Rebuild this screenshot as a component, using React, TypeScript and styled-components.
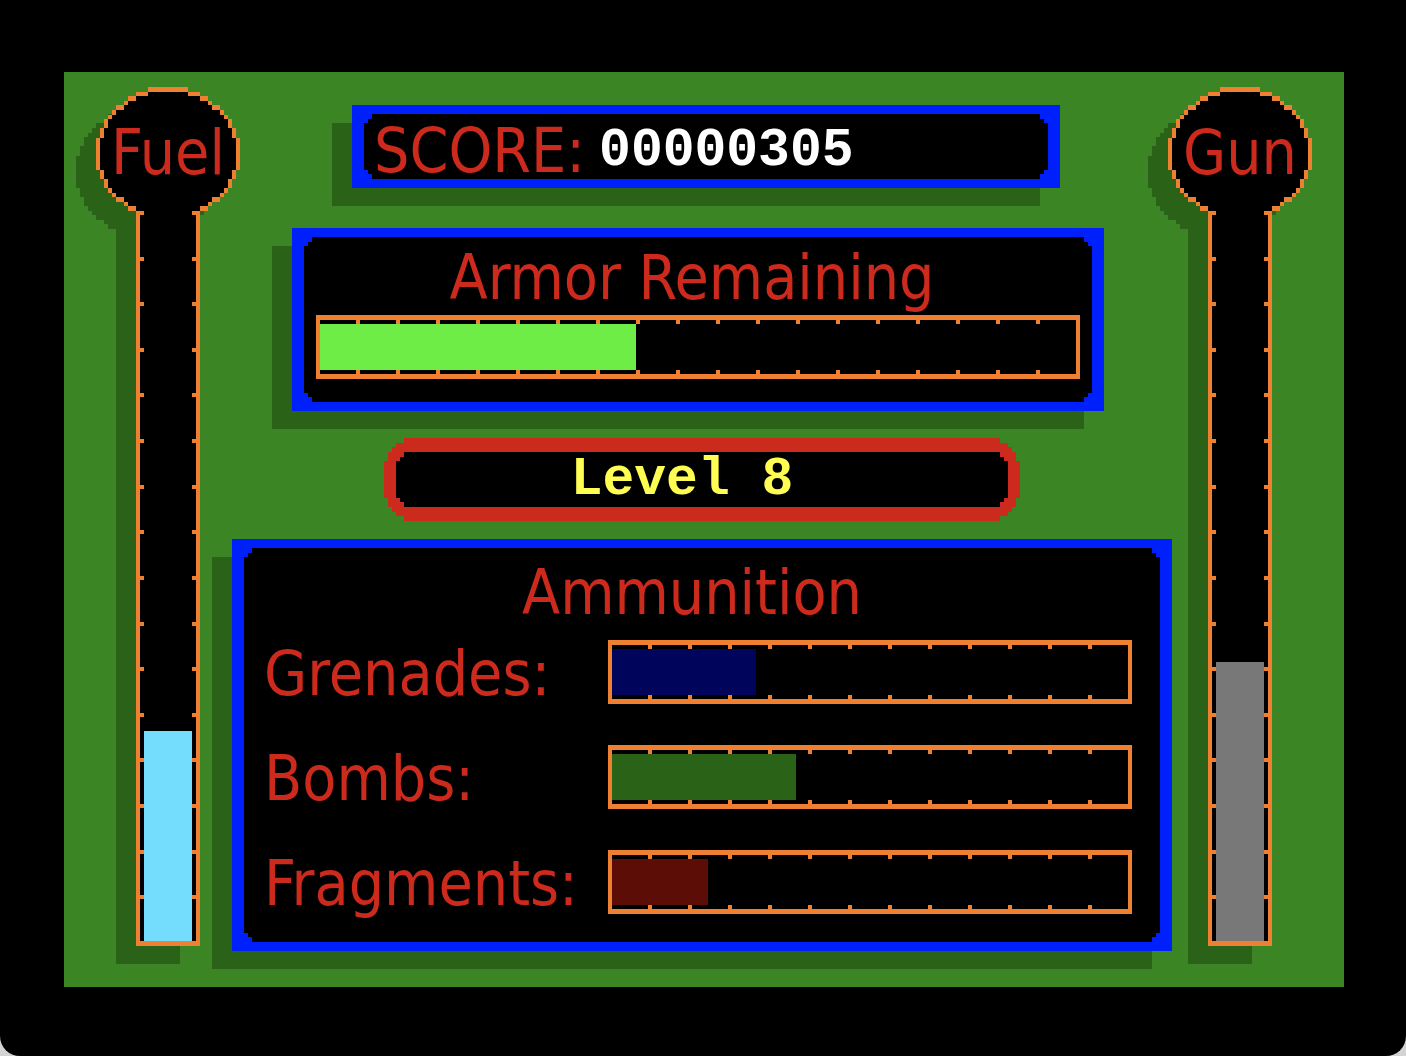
import React, { useId } from "react";
import styled, { createGlobalStyle } from "styled-components";

const color = {
  field: "#3c8524",
  shadow: "#2a6217",
  blue: "#0020fb",
  red: "#cb2a1d",
  orange: "#ef7f31",
  yellow: "#fffc52",
  lime: "#6ded46",
  sky: "#74dcfd",
  steel: "#787878",
  navy: "#00055b",
  moss: "#2a6318",
  maroon: "#5b0d06",
};

const displayFont = `"DejaVu Sans Condensed", "DejaVu Sans", sans-serif`;
const monoFont = `"Liberation Mono", "DejaVu Sans Mono", monospace`;

type Point = [number, number];

/* Builds a polygon whose four corners repeat the same stair, listed from the
   left edge up to the top edge. */
function steppedCorners(stair: Point[]) {
  const far = (n: number) => `calc(100% - ${n}px)`;
  const near = (n: number) => `${n}px`;
  const back = [...stair].reverse();
  return `polygon(${[
    ...stair.map(([x, y]) => `${near(x)} ${near(y)}`),
    ...back.map(([x, y]) => `${far(x)} ${near(y)}`),
    ...stair.map(([x, y]) => `${far(x)} ${far(y)}`),
    ...back.map(([x, y]) => `${near(x)} ${far(y)}`),
  ].join(", ")})`;
}

const innerStair = steppedCorners([[0, 9], [4, 9], [4, 5], [8, 5], [8, 0]]);
const pillStair = steppedCorners([
  [0, 23], [4, 23], [4, 14], [8, 14], [8, 9], [12, 9], [12, 5], [20, 5], [20, 0],
]);

const GlobalStyle = createGlobalStyle`
  *, *::before, *::after { box-sizing: border-box; }
  body { margin: 0; background: #d4d4d4; }
`;

const Cabinet = styled.div`
  min-height: 100vh;
  padding: 72px 62px 69px 64px;
  background: #000;
  border-radius: 0 0 20px 20px;
`;

const Screen = styled.main`
  display: flex;
  padding: 0 32px;
  background: ${color.field};
  color: ${color.red};
  font-family: ${displayFont};
  font-size: 62px;
`;

const Center = styled.div`
  flex: 1;
  min-width: 0;
  margin: 0 -4px 0 -8px;
  padding: 33px 0 36px;
`;

const Panel = styled.section<{ $margin: string }>`
  margin: ${(p) => p.$margin};
  padding: 9px 12px;
  background: ${color.blue};
  box-shadow: -20px 18px 0 ${color.shadow};
`;

const PanelBody = styled.div<{ $padding: string }>`
  padding: ${(p) => p.$padding};
  background: #000;
  clip-path: ${innerStair};
`;

const ScoreLine = styled(PanelBody)`
  display: flex;
  align-items: center;
  gap: 14px;
  line-height: 57px;
  white-space: nowrap;
`;

const Readout = styled.span<{ $color: string }>`
  padding-top: 2px;
  color: ${(p) => p.$color};
  font-family: ${monoFont};
  font-size: 53px;
  font-weight: 700;
  line-height: 53px;
`;

const Pill = styled.section`
  margin: 0 152px 18px;
  padding: 14px 12px;
  background: ${color.red};
  clip-path: ${pillStair};
`;

const PillBody = styled.div`
  display: flex;
  justify-content: center;
  padding-right: 40px;
  background: #000;
  clip-path: ${innerStair};
`;

const Title = styled.h2`
  margin: 0;
  padding: 4px 12px 0 0;
  font-size: 62px;
  font-weight: 400;
  line-height: 74px;
  text-align: center;
  white-space: nowrap;
`;

const AmmoList = styled.div`
  display: grid;
  gap: 37px;
  margin-top: 10px;
`;

const AmmoRow = styled.div`
  display: grid;
  grid-template-columns: 344px 1fr;
  align-items: start;
  line-height: 68px;
  white-space: nowrap;
`;

const Bar = styled.div<{ $segments: number }>`
  --step: calc((100% + 4px) / ${(p) => p.$segments});
  --ticks: repeating-linear-gradient(
    to right,
    transparent 0 calc(var(--step) - 4px),
    ${color.orange} calc(var(--step) - 4px) var(--step)
  );
  height: 64px;
  padding: 4px 0;
  border: solid ${color.orange};
  border-width: 5px 4px;
  background: var(--ticks) top / 100% 4px no-repeat padding-box,
    var(--ticks) bottom / 100% 4px no-repeat padding-box;
`;

const BarFill = styled.div<{ $color: string }>`
  height: 100%;
  background: ${(p) => p.$color};
`;

const GaugeBox = styled.section`
  display: flex;
  flex: none;
  flex-direction: column;
  align-items: center;
  width: 144px;
  padding: 15px 0 41px;
  filter: drop-shadow(-20px 18px 0 ${color.shadow});
`;

const GaugeHead = styled.div`
  display: grid;
  width: 100%;
  height: 124px;

  > * {
    grid-area: 1 / 1;
  }
`;

const GaugeLabel = styled.span`
  padding-top: 8px;
  line-height: 116px;
  text-align: center;
`;

const Tube = styled.div`
  --step: calc(100% / 16);
  --ticks: repeating-linear-gradient(
    to bottom,
    ${color.orange} 0 4px,
    transparent 4px var(--step)
  );
  display: flex;
  flex: 1;
  flex-direction: column;
  justify-content: flex-end;
  width: 64px;
  padding: 0 4px;
  border: solid ${color.orange};
  border-width: 0 4px 5px;
  background: var(--ticks) left / 4px 100% no-repeat padding-box,
    var(--ticks) right / 4px 100% no-repeat padding-box, #000;
`;

const TubeFill = styled.div<{ $color: string }>`
  background: ${(p) => p.$color};
`;

/* Left outline of the gauge head, one [column, run length] per pixel row. */
const headRows: Point[] = [
  [13, 5], [10, 3], [8, 2], [7, 1], [5, 2], [4, 1], [3, 1],
  [2, 1], [2, 1], [1, 1], [1, 1],
  [0, 1], [0, 1], [0, 1], [0, 1], [0, 1], [0, 1], [0, 1],
  [1, 1], [1, 1], [2, 1], [2, 1], [3, 1], [4, 1], [5, 2], [7, 1], [8, 2],
];

function HeadShape() {
  return (
    <svg
      width="144"
      height="124"
      viewBox="0 0 36 27"
      preserveAspectRatio="none"
      shapeRendering="crispEdges"
      aria-hidden="true"
    >
      {headRows.map(([col, run], row) => (
        <g key={row}>
          <rect x={col} y={row} width={36 - col * 2} height="1" fill="#000" />
          <rect x={col} y={row} width={run} height="1" fill={color.orange} />
          <rect x={36 - col - run} y={row} width={run} height="1" fill={color.orange} />
        </g>
      ))}
    </svg>
  );
}

interface GaugeProps {
  label: string;
  value: number;
  fill: string;
}

function Gauge({ label, value, fill }: GaugeProps) {
  const id = useId();
  return (
    <GaugeBox>
      <GaugeHead>
        <HeadShape />
        <GaugeLabel id={id}>{label}</GaugeLabel>
      </GaugeHead>
      <Tube role="meter" aria-labelledby={id} aria-valuemin={0} aria-valuemax={100} aria-valuenow={value}>
        <TubeFill $color={fill} style={{ height: `${value}%` }} />
      </Tube>
    </GaugeBox>
  );
}

interface MeterProps {
  labelledBy: string;
  segments: number;
  value: number;
  fill: string;
}

function Meter({ labelledBy, segments, value, fill }: MeterProps) {
  return (
    <Bar
      $segments={segments}
      role="meter"
      aria-labelledby={labelledBy}
      aria-valuemin={0}
      aria-valuemax={100}
      aria-valuenow={value}
    >
      <BarFill $color={fill} style={{ width: `${value}%` }} />
    </Bar>
  );
}

const ammunition = [
  { id: "grenades", label: "Grenades:", value: 28, fill: color.navy },
  { id: "bombs", label: "Bombs:", value: 35.7, fill: color.moss },
  { id: "fragments", label: "Fragments:", value: 18.6, fill: color.maroon },
];

export default function App() {
  return (
    <>
      <GlobalStyle />
      <Cabinet>
        <Screen>
          <Gauge label="Fuel" value={28.8} fill={color.sky} />
          <Center>
            <Panel $margin="0 112px 40px 120px">
              <ScoreLine $padding="8px 10px 0">
                <span>SCORE:</span>
                <Readout $color="#fff">00000305</Readout>
              </ScoreLine>
            </Panel>
            <Panel $margin="0 68px 27px 60px">
              <PanelBody $padding="0 12px 23px">
                <Title id="armor">Armor Remaining</Title>
                <Meter labelledBy="armor" segments={19} value={41.8} fill={color.lime} />
              </PanelBody>
            </Panel>
            <Pill>
              <PillBody>
                <Readout $color={color.yellow}>Level 8</Readout>
              </PillBody>
            </Pill>
            <Panel $margin="0">
              <PanelBody $padding="4px 28px 24px 20px">
                <Title>Ammunition</Title>
                <AmmoList>
                  {ammunition.map((item) => (
                    <AmmoRow key={item.id}>
                      <span id={item.id}>{item.label}</span>
                      <Meter labelledBy={item.id} segments={13} value={item.value} fill={item.fill} />
                    </AmmoRow>
                  ))}
                </AmmoList>
              </PanelBody>
            </Panel>
          </Center>
          <Gauge label="Gun" value={38.2} fill={color.steel} />
        </Screen>
      </Cabinet>
    </>
  );
}
